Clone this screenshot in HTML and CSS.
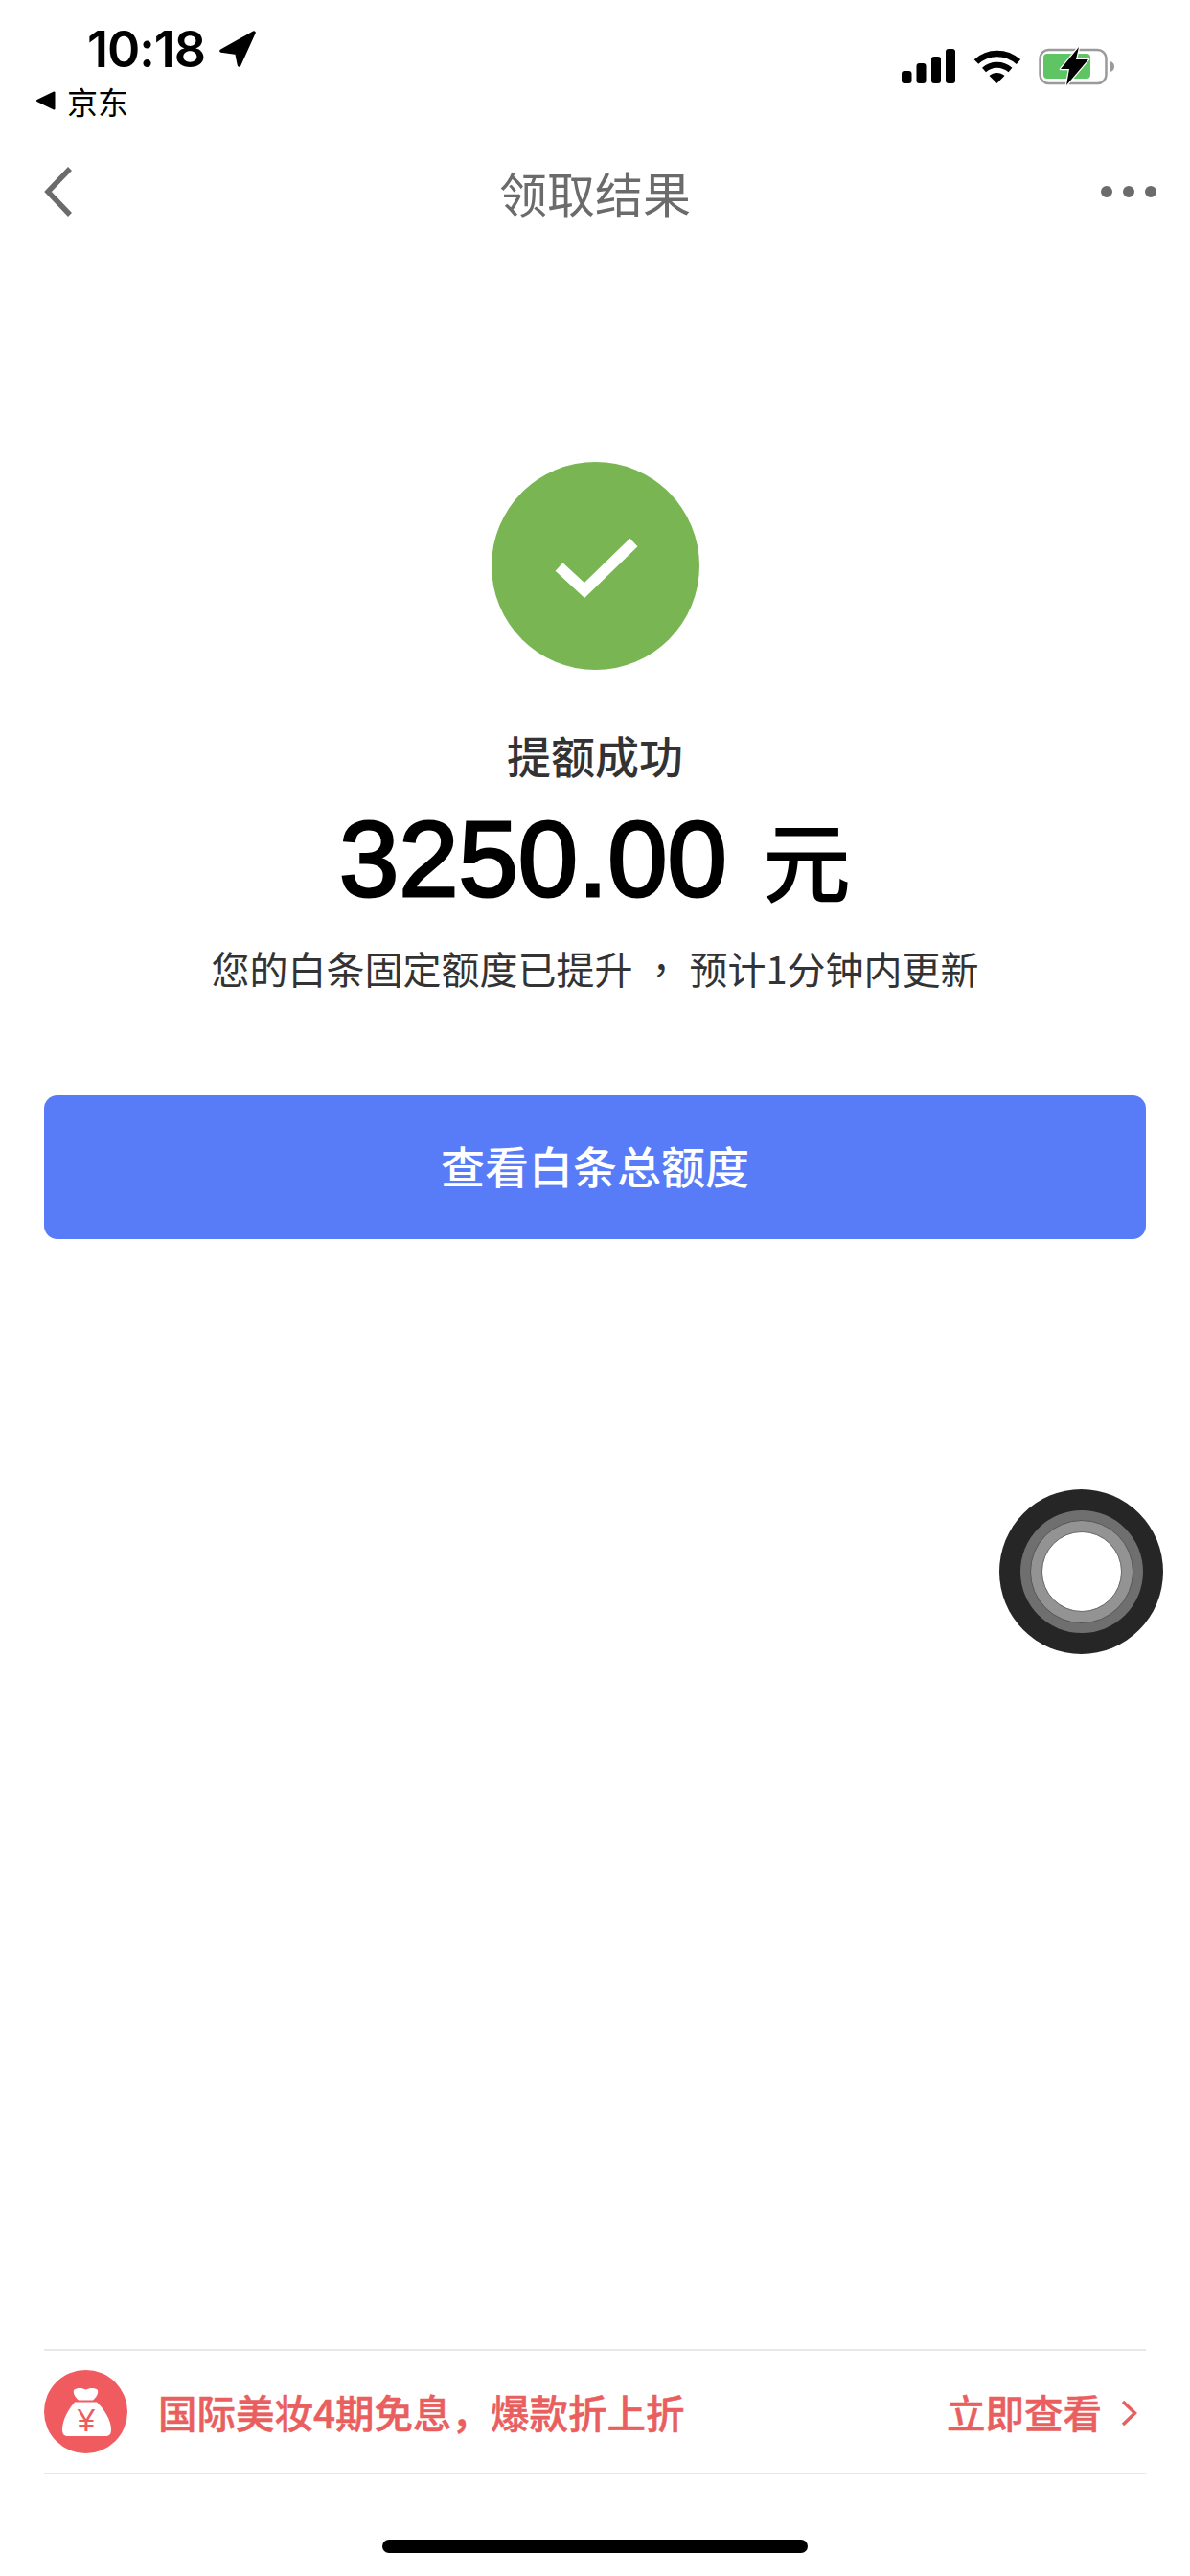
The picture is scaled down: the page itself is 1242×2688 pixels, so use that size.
FILE: index.html
```html
<!DOCTYPE html>
<html lang="zh-CN">
<head>
  <meta charset="UTF-8">
  <meta name="viewport" content="width=device-width, initial-scale=1.0">
  <title>领取结果</title>
  <link rel="stylesheet" href="styles.css">
</head>
<body>
  <div class="page">
    <div class="status">
      <div class="status-left">
        <div class="clock">
          <span>10:18</span>
          <svg class="loc" viewBox="0 0 37 37"><path d="M35 2 2 20.500 17.500 22.500 20 35z" fill="#000" stroke="#000" stroke-width="3.500" stroke-linejoin="round"/></svg>
        </div>
        <div class="back-app">
          <svg class="back-tri" viewBox="0 0 21 20"><path d="M19.500 1.500V18.500L2 10z" fill="#000" stroke="#000" stroke-width="2" stroke-linejoin="round"/></svg>
          <span>京东</span>
        </div>
      </div>
      <div class="status-right">
        <svg class="signal" viewBox="0 0 56 36">
          <rect x="0" y="23" width="10.500" height="13" rx="3"/>
          <rect x="15.500" y="15" width="10" height="21" rx="3"/>
          <rect x="31" y="8" width="10" height="28" rx="3"/>
          <rect x="46" y="0" width="10" height="36" rx="3"/>
        </svg>
        <svg class="wifi" viewBox="0 0 50 36">
          <path d="M3 13.500C15 2 34 2 47 13.500" fill="none" stroke="#000" stroke-width="6.500"/>
          <path d="M11 22C19 15 30 15 38.500 22" fill="none" stroke="#000" stroke-width="6"/>
          <path d="M24.500 36 16.500 28C21 24 28 24 32.500 28z" fill="#000"/>
        </svg>
        <svg class="battery" viewBox="0 0 80 42">
          <rect x="1.500" y="3" width="69" height="35" rx="9" fill="#fff" stroke="#9a9a9a" stroke-width="2.500"/>
          <rect x="5" y="7" width="49" height="26" rx="4" fill="#5ec464"/>
          <path d="M75 15c3 1 4 3 4 5.500s-1 4.500-4 5.500z" fill="#9a9a9a"/>
          <path d="M42 0 23 23h9L29 40 52 13H39z" fill="#000" stroke="#fff" stroke-width="2.500" stroke-linejoin="round" paint-order="stroke"/>
        </svg>
      </div>
    </div>

    <header class="nav">
      <svg class="nav-back" viewBox="0 0 30 52"><path d="M27 2 4 26l23 24" fill="none" stroke="#6b6b6b" stroke-width="5.500"/></svg>
      <h1>领取结果</h1>
      <div class="dots"><i></i><i></i><i></i></div>
    </header>

    <main class="result">
      <svg class="ok" viewBox="0 0 217 217">
        <circle cx="108.500" cy="108.500" r="108.500" fill="#7ab553"/>
        <path d="M70.500 109.500 97 134 148.500 84" fill="none" stroke="#fff" stroke-width="11.500"/>
      </svg>
      <h2>提额成功</h2>
      <p class="amount"><span>3250.00</span> <b>元</b></p>
      <p class="note">您的白条固定额度已提升<span class="comma">，</span>预计1分钟内更新</p>
      <button class="total-btn">查看白条总额度</button>
    </main>

    <div class="promo">
      <svg class="bag" viewBox="0 0 87 87">
        <circle cx="43.500" cy="43.500" r="43.500" fill="#ef5b5f"/>
        <path d="M31 21c4-3 9-2 12.500-.5 3.500-1.500 9-2.500 12.500 .5 1 4-2 8-5 10.500H36c-3-2.500-6-6.500-5-10.500z" fill="#fff"/>
        <path d="M32 33.500H55C62 40 70 52 70 62c0 5-2 7-6 7H25c-4 0-6-2-6-7 0-10 7-22 13-28.500z" fill="#fff"/>
        <text x="44" y="64" text-anchor="middle" class="bag-yen">¥</text>
      </svg>
      <span class="promo-text">国际美妆4期免息，爆款折上折</span>
      <span class="promo-link">立即查看</span>
      <svg class="promo-arrow" viewBox="0 0 17 28"><path d="M2 2 14.500 14 2 26" fill="none" stroke="#e95f60" stroke-width="3.500"/></svg>
    </div>

    <div class="home-bar"></div>

    <div class="touch"><div class="touch-mid"><div class="touch-in"><div class="touch-dot"></div></div></div></div>
  </div>
</body>
</html>
```

FILE: styles.css
```css
* {
  box-sizing: border-box;
}
body {
  margin: 0;
  background: #fff;
  font-family: "Noto Sans CJK SC", "Liberation Sans", sans-serif;
}
.page {
  position: relative;
  display: flex;
  flex-direction: column;
  width: 1242px;
  height: 2688px;
  overflow: hidden;
}

/* status bar */
.status {
  display: flex;
  justify-content: space-between;
  height: 136px;
  padding: 27px 78px 0 37px;
}
.clock {
  display: flex;
  align-items: center;
  gap: 15px;
  height: 48px;
  padding-left: 54px;
  font-family: Inter, sans-serif;
  font-size: 52px;
  font-weight: 600;
  letter-spacing: -1px;
  color: #000;
}
.loc {
  width: 38px;
  height: 38px;
}
.back-app {
  display: flex;
  align-items: center;
  gap: 12px;
  height: 36px;
  margin-top: 12px;
  font-size: 32px;
  color: #000;
}
.back-tri {
  width: 21px;
  height: 20px;
}
.status-right {
  display: flex;
  align-items: flex-start;
  padding-top: 24px;
}
.signal {
  width: 56px;
  height: 36px;
  margin-right: 19px;
}
.wifi {
  width: 50px;
  height: 36px;
  margin-right: 18px;
}
.battery {
  width: 80px;
  height: 42px;
  margin-top: -2px;
}

/* nav */
.nav {
  display: grid;
  grid-template-columns: 1fr auto 1fr;
  align-items: center;
  height: 128px;
  padding: 0 35px;
}
.nav-back {
  width: 30px;
  height: 52px;
  margin-left: 11px;
}
.nav h1 {
  margin: 0;
  font-size: 50px;
  font-weight: 400;
  color: #6b6b6b;
}
.dots {
  display: flex;
  justify-content: flex-end;
  gap: 11px;
}
.dots i {
  width: 12px;
  height: 12px;
  border-radius: 50%;
  background: #6b6b6b;
}

/* result */
.result {
  display: flex;
  flex-direction: column;
  align-items: center;
  padding: 218px 46px 0;
}
.ok {
  width: 217px;
  height: 217px;
}
.result h2 {
  margin: 55px 0 0;
  font-size: 46px;
  line-height: 66px;
  font-weight: 500;
  color: #333;
}
.amount {
  margin: 10px 0 0;
  font-family: "Liberation Sans", "Noto Sans CJK SC", sans-serif;
  font-size: 112px;
  line-height: 130px;
  color: #000;
  -webkit-text-stroke: 3px #000;
}
.amount b {
  margin-left: 6px;
  font-family: "Noto Sans CJK SC", sans-serif;
  font-size: 92px;
  font-weight: 500;
  -webkit-text-stroke: 0;
}
.note {
  margin: 19px 0 0;
  font-size: 40px;
  line-height: 58px;
  color: #333;
}
.comma {
  display: inline-block;
  width: 59px;
  font-family: "Noto Sans CJK TC", sans-serif;
  text-align: center;
}
.total-btn {
  width: 100%;
  height: 150px;
  margin-top: 104px;
  padding-bottom: 8px;
  border: none;
  border-radius: 14px;
  background: #587bf7;
  color: #fff;
  font-family: inherit;
  font-size: 46px;
  font-weight: 500;
}

/* bottom promo */
.promo {
  display: flex;
  align-items: center;
  height: 131px;
  margin: auto 46px 0;
  border-top: 2px solid #e8e8e8;
  border-bottom: 2px solid #e8e8e8;
  color: #e95f60;
  font-size: 40.500px;
  font-weight: 500;
  -webkit-text-stroke: 0.5px #e95f60;
}
.bag {
  width: 87px;
  height: 87px;
  margin-right: 32px;
}
.bag-yen {
  font-family: "Liberation Sans", sans-serif;
  font-size: 33px;
  font-weight: 400;
  fill: #ef5b5f;
  stroke: none;
}
.promo-text {
  flex: 1;
}
.promo-arrow {
  width: 17px;
  height: 28px;
  margin: 2px 9px 0 20px;
}
.home-bar {
  width: 444px;
  height: 14px;
  margin: 68px auto 24px;
  border-radius: 7px;
  background: #000;
}

/* floating assistive touch button */
.touch {
  position: absolute;
  left: 1043px;
  top: 1554px;
  display: flex;
  align-items: center;
  justify-content: center;
  width: 171px;
  height: 172px;
  border-radius: 50%;
  background: #262626;
}
.touch-mid {
  display: flex;
  align-items: center;
  justify-content: center;
  width: 128px;
  height: 128px;
  border-radius: 50%;
  background: #6f6f6f;
}
.touch-in {
  display: flex;
  align-items: center;
  justify-content: center;
  width: 108px;
  height: 108px;
  border-radius: 50%;
  border: 1px solid #555;
  background: #939393;
}
.touch-dot {
  width: 84px;
  height: 84px;
  border-radius: 50%;
  border: 1px solid #666;
  background: #fff;
}
```
